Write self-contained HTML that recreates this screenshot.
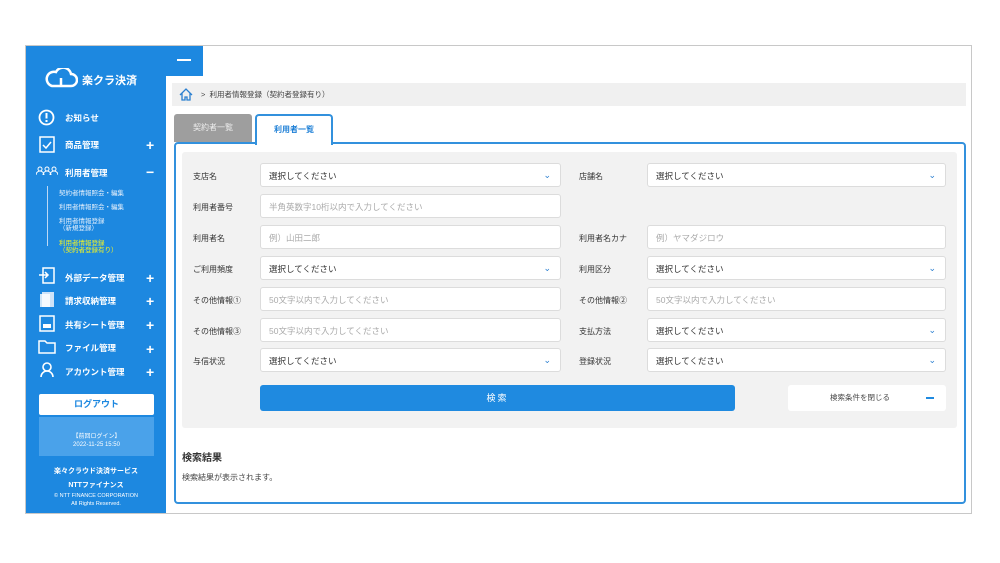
<!DOCTYPE html>
<html><head><meta charset="utf-8"><style>
*{margin:0;padding:0;box-sizing:border-box}
body{width:1000px;height:563px;background:#fff;position:relative;font-family:"Liberation Sans","Noto Sans CJK JP",sans-serif;overflow:hidden}
.a{position:absolute}
.frame{left:25px;top:45px;width:947px;height:469px;border:1px solid #c8c8c8}
.side{left:26px;top:46px;width:140px;height:467px;background:#1d88e0;color:#fff}
.top{left:166px;top:46px;width:37px;height:30px;background:#1d88e0}
.nav{position:absolute;left:39px;font-size:8.5px;font-weight:bold;color:#fff;white-space:nowrap}
.plus{position:absolute;left:120px;font-size:14px;color:#fff;font-weight:bold}
.sub{position:absolute;left:33px;font-size:6.5px;color:#e6f0fb;line-height:7px}
.lbl{position:absolute;font-size:8px;color:#333}
.in{position:absolute;height:24px;background:#fff;border:1px solid #dcdcdc;border-radius:3px;font-size:8.5px;color:#333;padding:6px 0 0 8px}
.ph{color:#aaa}
.chev{position:absolute;right:9px;top:6px;color:#2a7fd0;font-size:9px}
</style></head><body>
<div class="a frame"></div>
<div class="a side">
 <svg class="a" style="left:18px;top:22px" width="34" height="20" viewBox="0 0 34 20"><path d="M8 18 H27 a6 6 0 0 0 0-12 a8 8 0 0 0-15-2 a7 7 0 0 0-4 14z" fill="none" stroke="#fff" stroke-width="2.5"/><path d="M17 10v8" stroke="#fff" stroke-width="2.5"/></svg>
 <div class="a" style="left:56px;top:26px;font-size:11px;font-weight:bold">楽クラ決済</div>
 <svg class="a" style="left:12px;top:63px" width="17" height="17"><circle cx="8.5" cy="8.5" r="7" fill="none" stroke="#fff" stroke-width="1.8"/><path d="M8.5 4v5.5M8.5 11v2" stroke="#fff" stroke-width="2"/></svg>
 <div class="nav" style="top:66px">お知らせ</div>
 <svg class="a" style="left:13px;top:89px" width="16" height="18"><rect x="1" y="2" width="14" height="15" fill="none" stroke="#fff" stroke-width="1.5"/><path d="M4 10l3 3 5-6" stroke="#fff" fill="none" stroke-width="1.5"/></svg>
 <div class="nav" style="top:93px">商品管理</div><div class="plus" style="top:91px">+</div>
 <svg class="a" style="left:10px;top:120px" width="22" height="9"><g fill="none" stroke="#fff" stroke-width="1"><circle cx="4" cy="3" r="2"/><circle cx="11" cy="3" r="2"/><circle cx="18" cy="3" r="2"/><path d="M0 9a4 4 0 0 1 8 0M7 9a4 4 0 0 1 8 0M14 9a4 4 0 0 1 8 0"/></g></svg>
 <div class="nav" style="top:121px">利用者管理</div><div class="plus" style="top:118px">−</div>
 <div class="a" style="left:21px;top:140px;width:1px;height:60px;background:#bcd8f5"></div>
 <div class="sub" style="top:144px">契約者情報照会・編集</div>
 <div class="sub" style="top:158px">利用者情報照会・編集</div>
 <div class="sub" style="top:172px">利用者情報登録<br>（新規登録）</div>
 <div class="sub" style="top:194px;color:#f5f520">利用者情報登録<br>（契約者登録有り）</div>
 <svg class="a" style="left:13px;top:221px" width="16" height="17"><rect x="4" y="1" width="11" height="15" fill="none" stroke="#fff" stroke-width="1.5"/><path d="M0 8h9M6 5l3 3-3 3" stroke="#fff" fill="none" stroke-width="1.5"/></svg>
 <div class="nav" style="top:226px">外部データ管理</div><div class="plus" style="top:224px">+</div>
 <svg class="a" style="left:13px;top:245px" width="16" height="17"><rect x="3" y="1" width="12" height="15" fill="#cfe3f8"/><rect x="1" y="3" width="10" height="13" fill="#fff" opacity=".8"/></svg>
 <div class="nav" style="top:249px">請求収納管理</div><div class="plus" style="top:247px">+</div>
 <svg class="a" style="left:13px;top:269px" width="16" height="17"><rect x="1" y="1" width="14" height="15" fill="none" stroke="#fff" stroke-width="1.5"/><rect x="4" y="9" width="8" height="4" fill="#fff"/></svg>
 <div class="nav" style="top:273px">共有シート管理</div><div class="plus" style="top:271px">+</div>
 <svg class="a" style="left:12px;top:294px" width="18" height="14"><path d="M1 1h6l2 2h8v10H1z" fill="none" stroke="#fff" stroke-width="1.5"/></svg>
 <div class="nav" style="top:296px">ファイル管理</div><div class="plus" style="top:295px">+</div>
 <svg class="a" style="left:14px;top:316px" width="14" height="16"><circle cx="7" cy="5" r="4" fill="none" stroke="#fff" stroke-width="1.6"/><path d="M1 15a6 6 0 0 1 12 0" fill="none" stroke="#fff" stroke-width="1.6"/></svg>
 <div class="nav" style="top:320px">アカウント管理</div><div class="plus" style="top:318px">+</div>
 <div class="a" style="left:13px;top:348px;width:115px;height:21px;background:#fff;border-radius:2px;color:#1d88e0;font-size:9px;font-weight:bold;text-align:center;line-height:21px">ログアウト</div>
 <div class="a" style="left:13px;top:371px;width:115px;height:39px;background:#4aa2ea;font-size:6px;text-align:center;padding-top:16px;line-height:8px">【前回ログイン】<br>2022-11-25 15:50</div>
 <div class="a" style="left:0;top:420px;width:140px;text-align:center;font-size:7px;font-weight:bold">楽々クラウド決済サービス</div>
 <div class="a" style="left:0;top:434px;width:140px;text-align:center;font-size:7px;font-weight:bold">NTTファイナンス</div>
 <div class="a" style="left:0;top:446px;width:140px;text-align:center;font-size:5.5px;line-height:8px">© NTT FINANCE CORPORATION<br>All Rights Reserved.</div>
</div>
<div class="a top"><div class="a" style="left:11px;top:13px;width:14px;height:2px;background:#fff"></div></div>
<div class="a" style="left:172px;top:83px;width:794px;height:23px;background:#f0f0f0"></div>
<svg class="a" style="left:179px;top:88px" width="14" height="13"><path d="M1 7L7 1l6 6M3 5v7h3V9h2v3h3V5" fill="none" stroke="#2a7fd0" stroke-width="1.3"/></svg>
<div class="a" style="left:201px;top:89px;font-size:7.5px;color:#444">&gt;&nbsp; 利用者情報登録（契約者登録有り）</div>
<div class="a" style="left:174px;top:114px;width:78px;height:28px;background:#9e9e9e;border-radius:3px 3px 0 0;color:#eee;font-size:8px;text-align:center;line-height:28px">契約者一覧</div>
<div class="a" style="left:174px;top:142px;width:792px;height:362px;border:2px solid #3391dd;border-radius:4px"></div>
<div class="a" style="left:255px;top:114px;width:78px;height:31px;background:#fff;border:2px solid #3391dd;border-bottom:none;border-radius:4px 4px 0 0;color:#1d7fd6;font-size:8px;font-weight:bold;text-align:center;line-height:28px">利用者一覧</div>
<div class="a" style="left:182px;top:152px;width:775px;height:276px;background:#f2f2f2;border-radius:3px"></div>

<div class="lbl" style="left:193px;top:171px">支店名</div>
<div class="in" style="left:260px;top:163px;width:301px">選択してください<span class="chev">⌄</span></div>
<div class="lbl" style="left:579px;top:171px">店舗名</div>
<div class="in" style="left:647px;top:163px;width:299px">選択してください<span class="chev">⌄</span></div>

<div class="lbl" style="left:193px;top:202px">利用者番号</div>
<div class="in ph" style="left:260px;top:194px;width:301px">半角英数字10桁以内で入力してください</div>

<div class="lbl" style="left:193px;top:233px">利用者名</div>
<div class="in ph" style="left:260px;top:225px;width:301px">例）山田二郎</div>
<div class="lbl" style="left:579px;top:233px">利用者名カナ</div>
<div class="in ph" style="left:647px;top:225px;width:299px">例）ヤマダジロウ</div>

<div class="lbl" style="left:193px;top:264px">ご利用頻度</div>
<div class="in" style="left:260px;top:256px;width:301px">選択してください<span class="chev">⌄</span></div>
<div class="lbl" style="left:579px;top:264px">利用区分</div>
<div class="in" style="left:647px;top:256px;width:299px">選択してください<span class="chev">⌄</span></div>

<div class="lbl" style="left:193px;top:295px">その他情報①</div>
<div class="in ph" style="left:260px;top:287px;width:301px">50文字以内で入力してください</div>
<div class="lbl" style="left:579px;top:295px">その他情報②</div>
<div class="in ph" style="left:647px;top:287px;width:299px">50文字以内で入力してください</div>

<div class="lbl" style="left:193px;top:326px">その他情報③</div>
<div class="in ph" style="left:260px;top:318px;width:301px">50文字以内で入力してください</div>
<div class="lbl" style="left:579px;top:326px">支払方法</div>
<div class="in" style="left:647px;top:318px;width:299px">選択してください<span class="chev">⌄</span></div>

<div class="lbl" style="left:193px;top:356px">与信状況</div>
<div class="in" style="left:260px;top:348px;width:301px">選択してください<span class="chev">⌄</span></div>
<div class="lbl" style="left:579px;top:356px">登録状況</div>
<div class="in" style="left:647px;top:348px;width:299px">選択してください<span class="chev">⌄</span></div>

<div class="a" style="left:260px;top:385px;width:475px;height:26px;background:#1f8ae0;border-radius:3px;color:#fff;font-size:9px;text-align:center;line-height:26px;letter-spacing:2px">検索</div>
<div class="a" style="left:788px;top:385px;width:158px;height:26px;background:#fff;border-radius:3px;font-size:7.5px;color:#444;line-height:26px;padding-left:42px">検索条件を閉じる<span style="position:absolute;left:138px;top:12px;width:8px;height:2px;background:#1f8ae0"></span></div>

<div class="a" style="left:182px;top:449px;font-size:10px;font-weight:bold;color:#333">検索結果</div>
<div class="a" style="left:182px;top:472px;font-size:8px;color:#444">検索結果が表示されます。</div>
</body></html>
